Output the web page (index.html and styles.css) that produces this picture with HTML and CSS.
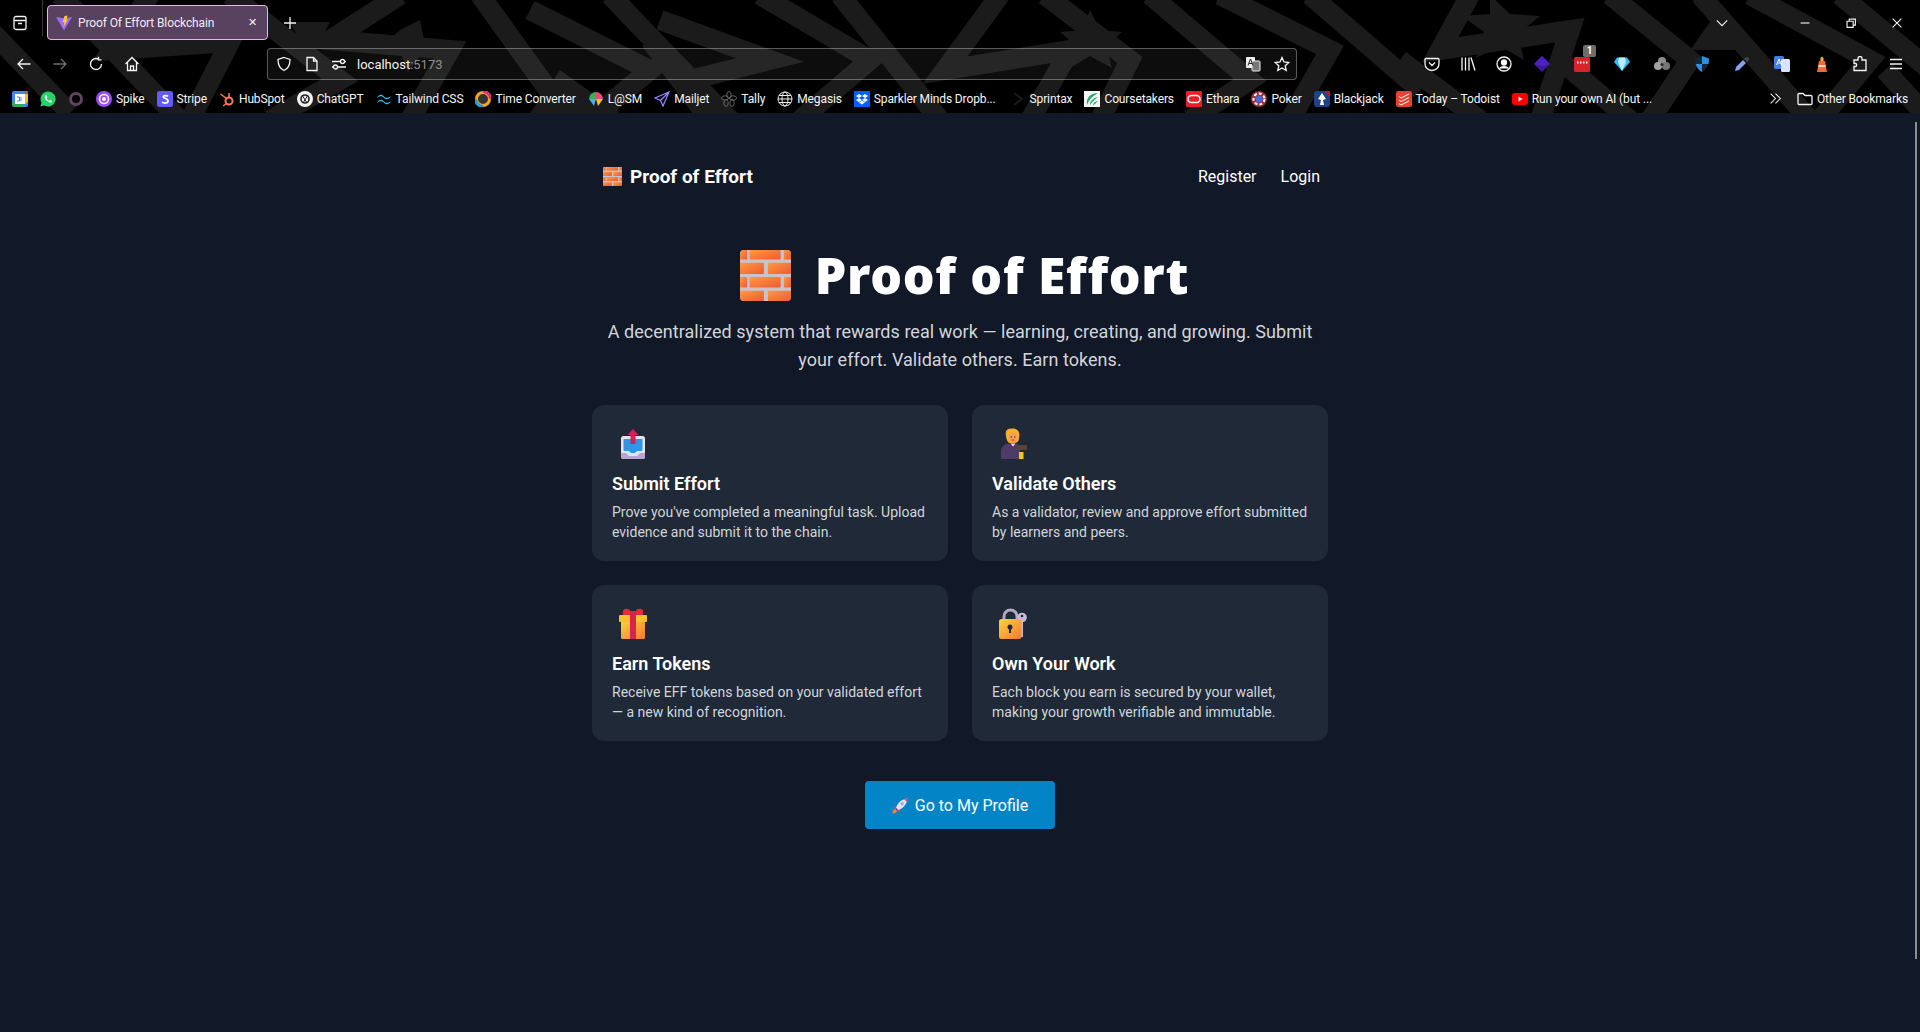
FILE: index.html
```html
<!DOCTYPE html>
<html lang="en">
<head>
    <meta charset="UTF-8">
    <meta name="viewport" content="width=device-width, initial-scale=1.0">
    <title>Proof Of Effort Blockchain</title>
    <link rel="stylesheet" href="styles.css">
</head>
<body>
    <svg class="defs" width="0" height="0" aria-hidden="true">
        <defs>
            <linearGradient id="brick-fill" x1="0" y1="0" x2="1" y2="1">
                <stop offset="0" stop-color="#ff9a3e"/>
                <stop offset="1" stop-color="#ee5a34"/>
            </linearGradient>
            <linearGradient id="gold-fill" x1="0" y1="0" x2="1" y2="1">
                <stop offset="0" stop-color="#ffd23c"/>
                <stop offset="1" stop-color="#f4792f"/>
            </linearGradient>
            <symbol id="brick" viewBox="0 0 32 32">
                <rect width="32" height="32" rx="2.5" fill="#c9c3c9"/>
                <g fill="url(#brick-fill)">
                    <path d="M0 2.5A2.5 2.5 0 0 1 2.5 0H4.5V6H0Z"/>
                    <rect x="6" width="19.5" height="6" rx=".6"/>
                    <path d="M27.5 0H29.5A2.5 2.5 0 0 1 32 2.5V6H27.5Z"/>
                    <rect y="8" width="15" height="7" rx=".6"/>
                    <rect x="17.500" y="8" width="14.500" height="7" rx=".6"/>
                    <rect y="17" width="4.500" height="6.500" rx=".6"/>
                    <rect x="6" y="17" width="19.500" height="6.500" rx=".6"/>
                    <rect x="27.500" y="17" width="4.500" height="6.500" rx=".6"/>
                    <path d="M0 25.500H15V32H2.500A2.500 2.500 0 0 1 0 29.500Z"/>
                    <path d="M17.500 25.500H32V29.500A2.500 2.500 0 0 1 29.500 32H17.500Z"/>
                </g>
            </symbol>
        </defs>
    </svg>

    <header class="browser">
        <svg class="browser-bg" viewBox="0 0 1920 113" preserveAspectRatio="none" aria-hidden="true">
            <g fill="none" stroke="#1b1b1b" stroke-width="20">
                <path d="M-10 30L70 113M60 -5L180 120M150 -5L112 50L230 42L190 120"/>
                <path d="M230 -5L340 80L270 120M400 -5L330 40L450 50L410 120"/>
                <path d="M480 -5L570 120M530 10L650 70L590 120M610 -5L730 120"/>
                <path d="M650 40L710 120M660 20L770 60L690 80M760 -5L870 60L800 120"/>
                <path d="M840 -5L940 120M1000 -5L945 70L1070 50L1030 120"/>
                <path d="M1045 -5L1130 60L1100 120M1150 -5L1250 80L1190 120"/>
                <path d="M1220 -5L1330 50L1290 120M1310 -5L1420 90M1400 60L1480 120"/>
                <path d="M1470 -5L1440 50L1570 30L1540 120M1560 60L1630 120M1610 -5L1690 60L1650 120"/>
                <path d="M1700 -5L1810 120M1750 -5L1870 60L1820 120M1840 -5L1930 70M1885 70L1930 120"/>
            </g>
            <g fill="#1b1b1b">
                <path d="M560 70L620 113H530Z"/>
                <path d="M1490 -5L1510 14L1540 16L1518 34L1524 60L1500 46L1476 58L1484 32L1462 16L1490 14Z"/>
                <path d="M1090 10L1100 30L1122 32L1106 46L1112 68L1090 56L1070 68L1076 46L1060 32L1082 30Z"/>
                <path d="M400 30L420 20L424 40L440 50L420 56L408 72L400 52L384 44Z"/>
                <path d="M1720 8L1750 50L1690 50Z"/>
                <path d="M290 22L330 22L310 60Z"/>
            </g>
        </svg>

        <div class="tabstrip">
            <svg class="chrome-icon tab-list" viewBox="0 0 16 16" aria-hidden="true"><path d="M2 6.500V3.500A2 2 0 0 1 4 1.500H12A2 2 0 0 1 14 3.500V6.500M2 5.500H14V12.500A2 2 0 0 1 12 14.500H4A2 2 0 0 1 2 12.500ZM6 8.500H10"/></svg>
            <div class="tab-sep"></div>
            <div class="tab">
                <svg class="favicon" viewBox="0 0 16 16" aria-hidden="true">
                    <path d="M0 2L7.500 3.200L16 2L8 15.500Z" fill="#9d6cff"/>
                    <path d="M8.500 1L11.500 .5L10.500 5L12 4.500L7.500 12L8.300 7L6.500 7.500Z" fill="#ffca28"/>
                </svg>
                <span class="tab-title">Proof Of Effort Blockchain</span>
                <span class="tab-close">✕</span>
            </div>
            <svg class="chrome-icon tab-new" viewBox="0 0 16 16" aria-hidden="true"><path d="M8 2V14M2 8H14"/></svg>
            <div class="window-controls">
                <svg class="chrome-icon win-chevron" viewBox="0 0 16 16" aria-hidden="true"><path d="M2 5L8 11L14 5"/></svg>
                <svg class="chrome-icon win-min" viewBox="0 0 16 16" aria-hidden="true"><path d="M3 8H13"/></svg>
                <svg class="chrome-icon win-restore" viewBox="0 0 16 16" aria-hidden="true"><path d="M3.500 6H10.500V13H3.500ZM6 6V3.500H13V10.500H10.500"/></svg>
                <svg class="chrome-icon win-close" viewBox="0 0 16 16" aria-hidden="true"><path d="M3 3L13 13M13 3L3 13"/></svg>
            </div>
        </div>

        <div class="toolbar">
            <div class="tool"><svg class="chrome-icon" viewBox="0 0 16 16" aria-hidden="true"><path d="M14.500 8H2M7 3L2 8L7 13"/></svg></div>
            <div class="tool tool-dim"><svg class="chrome-icon" viewBox="0 0 16 16" aria-hidden="true"><path d="M1.500 8H14M9 3L14 8L9 13"/></svg></div>
            <div class="tool"><svg class="chrome-icon" viewBox="0 0 16 16" aria-hidden="true"><path d="M13.500 8A5.500 5.500 0 1 1 10.500 3.100M10.500 .8V3.800H13.500"/></svg></div>
            <div class="tool"><svg class="chrome-icon" viewBox="0 0 16 16" aria-hidden="true"><path d="M1.500 8L8 1.500L14.500 8M3.500 6.500V14.500H12.500V6.500M6.500 14.500V10H9.500V14.500"/></svg></div>

            <div class="urlbar">
                <svg class="chrome-icon" viewBox="0 0 16 16" aria-hidden="true"><path d="M8 1.500L14 3.500C14 9 12 12.800 8 14.500C4 12.800 2 9 2 3.500Z"/></svg>
                <svg class="chrome-icon url-page" viewBox="0 0 16 16" aria-hidden="true"><path d="M3 1.500H9.500L13 5V14.500H3ZM9.500 1.500V5H13"/></svg>
                <svg class="chrome-icon url-perm" viewBox="0 0 16 16" aria-hidden="true"><path d="M1 5.500H9M14 5.500H15M1 11H2M7 11H15"/><circle cx="11.500" cy="5.500" r="2"/><circle cx="4.500" cy="11" r="2"/></svg>
                <span class="url-text">localhost<span class="url-port">:5173</span></span>
                <svg class="url-translate" viewBox="0 0 16 16" aria-hidden="true"><rect x="1" y="1" width="9" height="11" rx="1" fill="#eee"/><rect x="7" y="5" width="8" height="10" rx="1" fill="#777" stroke="#eee"/><path d="M3 9.500L5.500 3L8 9.500M4 7.500H7" stroke="#222" fill="none"/></svg>
                <svg class="chrome-icon url-star" viewBox="0 0 16 16" aria-hidden="true"><path d="M8 1.500L10 6L14.800 6.500L11.200 9.700L12.200 14.500L8 12L3.800 14.500L4.800 9.700L1.200 6.500L6 6Z"/></svg>
            </div>

            <div class="extensions">
                <div class="tool"><svg class="chrome-icon" viewBox="0 0 16 16" aria-hidden="true"><path d="M2 2.500H14A1 1 0 0 1 15 3.500V8A7 6.500 0 0 1 1 8V3.500A1 1 0 0 1 2 2.500ZM5 6.500L8 9.500L11 6.500"/></svg></div>
                <div class="tool"><svg class="chrome-icon" viewBox="0 0 16 16" aria-hidden="true"><path d="M2 1.500V14.500M5.500 1.500V14.500M9 1.500V14.500M11 1.500L15 14.500"/></svg></div>
                <div class="tool"><svg class="chrome-icon" viewBox="0 0 16 16" aria-hidden="true"><circle cx="8" cy="8" r="7"/><circle cx="8" cy="6.500" r="2.500" fill="#fff"/><path d="M3.500 12.500C5 10 11 10 12.500 12.500" fill="#fff"/></svg></div>
                <div class="ext"><svg viewBox="0 0 16 16" aria-hidden="true"><path d="M8 0L16 8L8 16L0 8Z" fill="#3b1a9a"/><path d="M8 0L16 8L8 10L0 8Z" fill="#4a22c4"/></svg></div>
                <div class="ext ext-badged">
                    <svg viewBox="0 0 16 16" aria-hidden="true"><rect y="1" width="16" height="15" rx="1.500" fill="#d8232a"/><path d="M3 6.500H4.500M6 6.500H7.500M9 6.500H10.500M12 6.500H13.500" stroke="#fff" stroke-width="2"/></svg>
                    <span class="ext-badge">1</span>
                </div>
                <div class="ext"><svg viewBox="0 0 16 16" aria-hidden="true"><path d="M3 1.500H13L16 6L8 15L0 6Z" fill="#39b8ee"/><path d="M5 1.500H11L12 6L8 15L4 6Z" fill="#b8ecff"/></svg></div>
                <div class="ext"><svg viewBox="0 0 16 16" aria-hidden="true"><circle cx="8" cy="5" r="4" fill="#8e8e8e"/><circle cx="4" cy="10" r="4" fill="#a2a2a2"/><circle cx="12" cy="10" r="4" fill="#777"/><circle cx="8" cy="8.500" r="1.500" fill="#222"/></svg></div>
                <div class="ext"><svg viewBox="0 0 16 16" aria-hidden="true"><path d="M8 0L15 2.500C15 9 12.500 13.500 8 16C3.500 13.500 1 9 1 2.500Z" fill="#14263c"/><path d="M8 0L15 2.500C15 5 14.800 6 14.500 8H8ZM8 8V16C5 14.500 2.500 11 1.600 8Z" fill="#2f8fd8"/></svg></div>
                <div class="ext"><svg viewBox="0 0 16 16" aria-hidden="true"><path d="M1 15L2 11L9 4L12 7L5 14Z" fill="#7ea3f0"/><path d="M10 3L13 0.500L15.500 3L13 6Z" fill="#444"/></svg></div>
                <div class="ext"><svg viewBox="0 0 16 16" aria-hidden="true"><rect width="10" height="13" rx="1.500" fill="#3f7fe8"/><rect x="7" y="3" width="9" height="13" rx="1.500" fill="#d8e4f8"/><path d="M2.500 9L5 3L7.500 9M3.500 7H6.500" stroke="#fff" fill="none"/></svg></div>
                <div class="ext"><svg viewBox="0 0 16 16" aria-hidden="true"><path d="M6.500 2L8 .5L9.500 2V5H6.500Z" fill="#f4b63f"/><path d="M5 5H11L13 16H3Z" fill="#f26a3b"/><path d="M4.600 9H11.400L11.700 11H4.300Z" fill="#ffd9c2"/></svg></div>
                <div class="tool tool-narrow"><svg class="chrome-icon" viewBox="0 0 16 16" aria-hidden="true"><path d="M6 2.500A2 2 0 0 1 10 2.500V4H14V14.500H2V10.500H4A2 2 0 0 0 4 7.500H2V4H6Z"/></svg></div>
                <div class="tool tool-narrow"><svg class="chrome-icon" viewBox="0 0 16 16" aria-hidden="true"><path d="M2 3.500H14M2 8H14M2 12.500H14"/></svg></div>
            </div>
        </div>

        <div class="bookmarks">
            <span class="bookmark"><svg viewBox="0 0 16 16" aria-hidden="true"><rect width="16" height="16" rx="2" fill="#4285f4"/><rect x="3" y="3" width="10" height="10" fill="#fff"/><path d="M0 11V14L2 16H11V13H3V11Z" fill="#34a853"/><path d="M13 0H16V3H13Z" fill="#ea4335"/><path d="M13 3H16V11L13 13Z" fill="#fbbc04"/><path d="M5 6H7.500V10H5M9 6V10.500" stroke="#4285f4" fill="none"/></svg></span>
            <span class="bookmark"><svg viewBox="0 0 16 16" aria-hidden="true"><path d="M8 .5A7.500 7.500 0 0 0 1.500 11.700L.5 15.500L4.400 14.500A7.500 7.500 0 1 0 8 .5Z" fill="#25d366"/><path d="M5 4.500L6.500 4.300L7.300 6.300L6.500 7.300C7 8.500 8 9.400 9 10L10 9L12 10L11.700 11.300C9 12.500 3.500 8 5 4.500Z" fill="#fff"/></svg></span>
            <span class="bookmark"><svg viewBox="0 0 16 16" aria-hidden="true"><circle cx="8" cy="8" r="5.500" fill="none" stroke="#5e4560" stroke-width="3"/></svg></span>
            <span class="bookmark"><svg viewBox="0 0 16 16" aria-hidden="true"><circle cx="8" cy="8" r="8" fill="#9a4df0"/><circle cx="8" cy="8" r="4.500" fill="none" stroke="#fff" stroke-width="1.400"/><circle cx="8" cy="8" r="2" fill="#fff"/></svg>Spike</span>
            <span class="bookmark"><svg viewBox="0 0 16 16" aria-hidden="true"><rect width="16" height="16" rx="2.500" fill="#635bff"/><path d="M11 5.300C9.500 4.300 6.500 4.200 6.300 5.800C6.100 7.500 11 7 11 10C11 12.300 7.500 12.500 5 11.300" fill="none" stroke="#fff" stroke-width="1.800"/></svg>Stripe</span>
            <span class="bookmark"><svg viewBox="0 0 16 16" aria-hidden="true"><circle cx="10" cy="10" r="3.500" fill="none" stroke="#ff7a59" stroke-width="2"/><path d="M10 6V2M7.500 7.500L1.500 3M7.500 12.500L4 15" stroke="#ff7a59" stroke-width="1.500"/></svg>HubSpot</span>
            <span class="bookmark"><svg viewBox="0 0 16 16" aria-hidden="true"><circle cx="8" cy="8" r="8" fill="#f2f2f2"/><circle cx="8" cy="8" r="4" fill="none" stroke="#222" stroke-width="1.600"/><path d="M5 4L10 12M11 4L6 12" stroke="#222"/></svg>ChatGPT</span>
            <span class="bookmark"><svg viewBox="0 0 16 16" aria-hidden="true"><path d="M1 7C3 3 6 3 8 5.500C9.500 7 12 7.500 15 5C13 9 10 9 8 6.800C6.500 5 4 4.500 1 7ZM1 12C3 8 6 8 8 10.500C9.500 12 12 12.500 15 10C13 14 10 14 8 11.800C6.500 10 4 9.500 1 12Z" fill="#38bdf8"/></svg>Tailwind CSS</span>
            <span class="bookmark"><svg viewBox="0 0 16 16" aria-hidden="true"><circle cx="8" cy="8" r="6.500" fill="#333" stroke="#f5a623" stroke-width="3"/><path d="M8 .5A7.500 7.500 0 0 1 15.500 8" fill="none" stroke="#e4317f" stroke-width="3"/><path d="M8 15.500A7.500 7.500 0 0 1 .5 8" fill="none" stroke="#16a3e0" stroke-width="3"/></svg>Time Converter</span>
            <span class="bookmark"><svg viewBox="0 0 16 16" aria-hidden="true"><path d="M1 8A7 7 0 0 1 8 1L8 8Z" fill="#37b24d"/><path d="M8 1A7 7 0 0 1 15 8L8 8Z" fill="#e64980"/><path d="M15 8L8 8L10 15Z" fill="#fcc419"/><path d="M8 8L1 8L6 15Z" fill="#4dabf7"/></svg>L@SM</span>
            <span class="bookmark"><svg viewBox="0 0 16 16" aria-hidden="true"><path d="M15 1L1 7L6.500 9.500L9 15ZM15 1L6.500 9.500" fill="none" stroke="#8f87ff" stroke-width="1.300"/></svg>Mailjet</span>
            <span class="bookmark"><svg viewBox="0 0 16 16" aria-hidden="true"><g fill="none" stroke="#666"><ellipse cx="8" cy="4" rx="2.200" ry="3.500"/><ellipse cx="4" cy="7" rx="3.500" ry="2.200"/><ellipse cx="12" cy="7" rx="3.500" ry="2.200"/><ellipse cx="5" cy="12" rx="2.200" ry="3.500"/><ellipse cx="11" cy="12" rx="2.200" ry="3.500"/></g></svg>Tally</span>
            <span class="bookmark"><svg viewBox="0 0 16 16" aria-hidden="true"><g fill="none" stroke="#eee"><circle cx="8" cy="8" r="7"/><ellipse cx="8" cy="8" rx="3" ry="7"/><path d="M1 8H15M2 4.500H14M2 11.500H14"/></g></svg>Megasis</span>
            <span class="bookmark"><svg viewBox="0 0 16 16" aria-hidden="true"><rect width="16" height="16" fill="#0061fe"/><path d="M5 3L8 5L5 7L2 5ZM11 3L14 5L11 7L8 5ZM5 7L8 9L5 11L2 9ZM11 7L14 9L11 11L8 9ZM5 11.500L8 9.700L11 11.500L8 13.500Z" fill="#fff"/></svg>Sparkler Minds Dropb...</span>
            <span class="bookmark bookmark-sprintax"><svg viewBox="0 0 16 16" aria-hidden="true"><path d="M4 2L12 8L4 14" fill="none" stroke="#1a1a1a" stroke-width="2"/></svg>Sprintax</span>
            <span class="bookmark"><svg viewBox="0 0 16 16" aria-hidden="true"><rect width="16" height="16" fill="#f2f7f3"/><path d="M14 2C6 2 2 7 3 14C6 7 9 5 14 2ZM14 6C9 7 6 10 6 14C8 11 10 9 14 6ZM14 10C11 10.500 9 12 9 14.500C11 13 12 12 14 10Z" fill="#1faa6b"/></svg>Coursetakers</span>
            <span class="bookmark"><svg viewBox="0 0 16 16" aria-hidden="true"><rect width="16" height="16" rx="1" fill="#ee1c25"/><rect x="2" y="4.500" width="12" height="7" rx="3.500" fill="none" stroke="#fff" stroke-width="1.500"/></svg>Ethara</span>
            <span class="bookmark"><svg viewBox="0 0 16 16" aria-hidden="true"><circle cx="8" cy="8" r="8" fill="#9b2c3a"/><circle cx="8" cy="8" r="5.500" fill="none" stroke="#fff" stroke-width="2" stroke-dasharray="3 2"/><circle cx="8" cy="8" r="3.500" fill="#3f6fd8"/></svg>Poker</span>
            <span class="bookmark"><svg viewBox="0 0 16 16" aria-hidden="true"><rect width="16" height="16" rx="3" fill="#1d428a"/><path d="M8 2L12 8L9 9L10 14L6 14L7 9L4 8Z" fill="#fff"/><path d="M10 0H16V6Z" fill="#c8102e"/></svg>Blackjack</span>
            <span class="bookmark"><svg viewBox="0 0 16 16" aria-hidden="true"><rect width="16" height="16" rx="2.500" fill="#e44332"/><path d="M3 5.500L5 7L13 3M3 9L5 10.500L13 6.500M3 12.500L5 14L13 10" fill="none" stroke="#fff"/></svg>Today – Todoist</span>
            <span class="bookmark"><svg viewBox="0 0 16 16" aria-hidden="true"><rect y="2" width="16" height="12" rx="3" fill="#f00"/><path d="M6.500 5.500L10.500 8L6.500 10.500Z" fill="#fff"/></svg>Run your own AI (but ...</span>
            <div class="bookmarks-end">
                <svg class="chrome-icon more-marks" viewBox="0 0 16 16" aria-hidden="true"><path d="M2 2L8 8L2 14M8 2L14 8L8 14"/></svg>
                <span class="bookmark"><svg class="chrome-icon" viewBox="0 0 16 16" aria-hidden="true"><path d="M1 3.500A1 1 0 0 1 2 2.500H6L8 4.500H14A1 1 0 0 1 15 5.500V12.500A1 1 0 0 1 14 13.500H2A1 1 0 0 1 1 12.500Z"/></svg>Other Bookmarks</span>
            </div>
        </div>
    </header>

    <div class="app">
        <nav class="navbar">
            <a class="brand" href="#"><svg class="brand-icon" aria-hidden="true"><use href="#brick"/></svg>Proof of Effort</a>
            <div class="nav-links">
                <a href="#">Register</a>
                <a href="#">Login</a>
            </div>
        </nav>

        <main class="home">
            <h1 class="hero-title"><svg class="hero-icon" aria-hidden="true"><use href="#brick"/></svg>Proof of Effort</h1>
            <p class="hero-text">A decentralized system that rewards real work — learning, creating, and growing. Submit your effort. Validate others. Earn tokens.</p>

            <section class="cards">
                <article class="card">
                    <svg class="card-icon" viewBox="0 0 36 36" aria-hidden="true">
                        <rect x="9" y="11" width="24" height="23" rx="2.500" fill="#e6e2ea"/>
                        <path d="M9 28H14L17 31H25L28 28H33V31.500A2.500 2.500 0 0 1 30.500 34H11.500A2.500 2.500 0 0 1 9 31.500Z" fill="#b9a6d0"/>
                        <path d="M11.500 14H30.500V24.500A1.500 1.500 0 0 1 29 26H25L23 28H19L17 26H13A1.500 1.500 0 0 1 11.500 24.500Z" fill="#2f97e8"/>
                        <path d="M21 4L26.500 10H23.500V19H18.500V10H15.500Z" fill="#d81e5b"/>
                    </svg>
                    <h3>Submit Effort</h3>
                    <p>Prove you've completed a meaningful task. Upload evidence and submit it to the chain.</p>
                </article>
                <article class="card">
                    <svg class="card-icon" viewBox="0 0 36 36" aria-hidden="true">
                        <path d="M9 34V26C9 21 13 18.500 18 18.500H23C26 18.500 28 21 28 24V34Z" fill="#4e3c68"/>
                        <path d="M18.500 18.500L21 21.500L23.500 18.500Z" fill="#e8e4ee"/>
                        <path d="M14 11C12.500 4 17 3.500 20.500 3.500C24.500 3.500 28.500 5.500 27 13C27 16 25 18 23 18H18C16 18 14.500 15 14 11Z" fill="#f6b324"/>
                        <ellipse cx="21" cy="12.500" rx="4.500" ry="5" fill="#f79a5c"/>
                        <circle cx="19.300" cy="12" r=".7" fill="#3a2a2a"/>
                        <circle cx="22.700" cy="12" r=".7" fill="#3a2a2a"/>
                        <path d="M19.800 15H22.200" stroke="#b3423a"/>
                        <rect x="25" y="20" width="10" height="5" rx="1" fill="#5d4037"/>
                        <rect x="27" y="27" width="4.500" height="7" fill="#f6c324"/>
                    </svg>
                    <h3>Validate Others</h3>
                    <p>As a validator, review and approve effort submitted by learners and peers.</p>
                </article>
                <article class="card">
                    <svg class="card-icon" viewBox="0 0 36 36" aria-hidden="true">
                        <circle cx="14.500" cy="7.500" r="3.800" fill="#e52b3a"/>
                        <circle cx="27.500" cy="7.500" r="3.800" fill="#e52b3a"/>
                        <rect x="9" y="16" width="24" height="18" rx="1.500" fill="url(#gold-fill)"/>
                        <rect x="7" y="10" width="28" height="7" rx="1" fill="#fbc02d"/>
                        <rect x="18" y="6" width="6" height="28" fill="#d8234f"/>
                    </svg>
                    <h3>Earn Tokens</h3>
                    <p>Receive EFF tokens based on your validated effort — a new kind of recognition.</p>
                </article>
                <article class="card">
                    <svg class="card-icon" viewBox="0 0 36 36" aria-hidden="true">
                        <path d="M12 15V11.500A6.500 6.500 0 0 1 25 11.500V15" fill="none" stroke="#b3a8bd" stroke-width="3"/>
                        <rect x="27" y="15" width="4" height="17" fill="#c7bad8"/>
                        <circle cx="30" cy="12.500" r="4.800" fill="#c7bad8"/>
                        <circle cx="30" cy="11" r="1.300" fill="#1f2937"/>
                        <rect x="7" y="14" width="22.500" height="20" rx="2.500" fill="url(#gold-fill)"/>
                        <circle cx="18" cy="22" r="2.500" fill="#23233a"/>
                        <rect x="17" y="22" width="2" height="6" fill="#23233a"/>
                    </svg>
                    <h3>Own Your Work</h3>
                    <p>Each block you earn is secured by your wallet, making your growth verifiable and immutable.</p>
                </article>
            </section>

            <a class="profile-btn" href="#">
                <svg class="rocket" viewBox="0 0 16 16" aria-hidden="true">
                    <path d="M.5 15.500C.5 13 1.500 11.500 3 11L5 13C4.500 14.500 3 15.500 .5 15.500Z" fill="#f08a24"/>
                    <path d="M4 8.500C3 8.500 2 9 1.500 10.500H5ZM7.500 12C7.500 13 7 14 5.500 14.500V11Z" fill="#f0386b"/>
                    <path d="M4 9.500C6 4.500 10 1 15.500 .5C15 6 11.500 10 6.500 12Z" fill="#e8e0ea"/>
                    <path d="M12 1C13.500 .7 14.500 .6 15.500 .5C15.400 1.500 15.300 2.500 15 4Z" fill="#f0386b"/>
                    <circle cx="10.200" cy="5.800" r="1.700" fill="#8fb5ec"/>
                </svg>
                Go to My Profile
            </a>
        </main>
    </div>

    <div class="scrollbar-thumb"></div>
</body>
</html>
```

FILE: styles.css
```css
* {
    box-sizing: border-box;
}

html,
body {
    margin: 0;
    padding: 0;
    height: 100%;
    overflow: hidden;
}

body {
    background-color: #111827;
    color: #ffffff;
    font-family: Roboto, "Noto Sans", sans-serif;
}

a {
    color: inherit;
    text-decoration: none;
}

.defs {
    position: absolute;
}

/* browser window */
.browser {
    position: relative;
    height: 113px;
    background-color: #000000;
    font-size: 12px;
    overflow: hidden;
}

.browser-bg {
    position: absolute;
    inset: 0;
    width: 100%;
    height: 100%;
}

.tabstrip,
.toolbar,
.bookmarks {
    position: relative;
    display: flex;
    align-items: center;
}

.chrome-icon {
    width: 16px;
    height: 16px;
    flex: none;
    fill: none;
    stroke: #f4f4f4;
    stroke-width: 1.3;
}

.tabstrip {
    height: 40px;
    padding-top: 5px;
}

.tab-list {
    margin-left: 12px;
}

.tab-sep {
    width: 1px;
    height: 36px;
    margin: -5px 4px 0 14px;
    align-self: flex-start;
    background-color: #3a3a3a;
}

.tab {
    display: flex;
    align-items: center;
    width: 221px;
    height: 35px;
    padding: 0 10px 0 8px;
    background-color: #59425f;
    border: 1px solid #e7b4ee;
    border-radius: 4px;
}

.favicon {
    width: 16px;
    height: 16px;
    flex: none;
}

.tab-title {
    flex: 1;
    margin-left: 6px;
    color: #f1eaf2;
    letter-spacing: -0.12px;
    white-space: nowrap;
}

.tab-close {
    font-size: 11px;
    color: #f4f4f4;
}

.tab-new {
    margin-left: 14px;
}

.window-controls {
    display: flex;
    align-items: center;
    margin-left: auto;
}

.window-controls .chrome-icon {
    width: 14px;
    height: 14px;
}

.win-chevron {
    margin-right: 69px;
}

.win-min {
    margin-right: 32px;
}

.win-restore {
    margin-right: 32px;
}

.win-close {
    margin-right: 16px;
}

.toolbar {
    height: 32px;
    margin-top: 8px;
    padding-left: 6px;
}

.tool,
.ext {
    display: flex;
    align-items: center;
    justify-content: center;
    flex: none;
    width: 36px;
    height: 32px;
}

.tool-dim {
    opacity: 0.45;
}

.tool-narrow {
    width: 36px;
}

.urlbar {
    display: flex;
    align-items: center;
    flex: none;
    width: 1030px;
    height: 32px;
    margin-left: 117px;
    padding: 0 6px 0 8px;
    background-color: rgba(255, 255, 255, 0.05);
    border: 1px solid rgba(255, 255, 255, 0.32);
    border-radius: 4px;
}

.url-page {
    margin-left: 12px;
}

.url-perm {
    margin-left: 11px;
}

.url-text {
    flex: 1;
    margin-left: 10px;
    font-size: 13px;
    color: #f2f2f2;
}

.url-port {
    color: #8d8d8d;
}

.url-translate {
    width: 16px;
    height: 16px;
    margin-right: 13px;
}

.extensions {
    display: flex;
    align-items: center;
    margin-left: 117px;
}

.ext {
    width: 40px;
}

.ext svg {
    width: 16px;
    height: 16px;
}

.ext-badged {
    position: relative;
}

.ext-badge {
    position: absolute;
    top: -3px;
    right: 6px;
    min-width: 13px;
    height: 12px;
    border-radius: 2px;
    background-color: #6d6d6d;
    font-size: 10px;
    font-weight: 700;
    line-height: 12px;
    text-align: center;
}

.bookmarks {
    height: 33px;
    padding: 4px 0 0 12px;
    gap: 12px;
}

.bookmark {
    display: inline-flex;
    align-items: center;
    flex: none;
    gap: 4px;
    color: #f5f5f5;
    letter-spacing: -0.12px;
    white-space: nowrap;
}

.bookmark svg {
    width: 16px;
    height: 16px;
    flex: none;
}

.bookmark-sprintax {
    margin-left: 2px;
}

.bookmarks-end {
    display: flex;
    align-items: center;
    margin-left: auto;
    padding-right: 12px;
    gap: 15px;
}

.more-marks {
    width: 13px;
    height: 13px;
}

/* page */
.navbar {
    display: flex;
    align-items: center;
    justify-content: space-between;
    width: 736px;
    height: 28px;
    margin: 49px auto 0;
    padding: 0 8px 0 11px;
}

.brand {
    display: flex;
    align-items: center;
    gap: 8px;
    font-size: 19px;
    font-weight: 700;
}

.brand-icon {
    width: 19px;
    height: 19px;
}

.nav-links {
    display: flex;
    gap: 24px;
    font-size: 16px;
}

.home {
    display: flex;
    flex-direction: column;
    align-items: center;
    width: 736px;
    margin: 0 auto;
}

.hero-title {
    display: flex;
    align-items: center;
    gap: 24px;
    height: 64px;
    margin: 53px 0 0;
    padding-left: 9px;
    font-family: "Noto Sans", sans-serif;
    font-size: 50px;
    font-weight: 900;
    letter-spacing: 0.7px;
    line-height: 64px;
}

.hero-icon {
    width: 51px;
    height: 51px;
}

.hero-text {
    width: 736px;
    margin: 11px 0 0;
    color: #d1d5db;
    font-size: 18px;
    letter-spacing: 0.04px;
    line-height: 28px;
    text-align: center;
}

.cards {
    display: grid;
    grid-template-columns: 1fr 1fr;
    gap: 24px;
    width: 100%;
    margin-top: 31px;
}

.card {
    height: 156px;
    padding: 20px;
    background-color: #1f2937;
    border-radius: 12px;
}

.card-icon {
    display: block;
    width: 36px;
    height: 36px;
    margin-bottom: 9px;
}

.card h3 {
    margin: 0 0 4px;
    font-size: 18px;
    font-weight: 600;
    line-height: 28px;
}

.card p {
    margin: 0;
    color: #d1d5db;
    font-size: 14px;
    line-height: 20px;
}

.profile-btn {
    display: flex;
    align-items: center;
    justify-content: center;
    gap: 7px;
    width: 190px;
    height: 48px;
    margin-top: 40px;
    padding-top: 1px;
    background-color: #0284c7;
    border-radius: 4px;
    font-size: 16px;
}

.rocket {
    width: 16px;
    height: 16px;
}

.scrollbar-thumb {
    position: absolute;
    top: 122px;
    right: 3px;
    width: 2px;
    height: 837px;
    background-color: #8d8d8d;
}
```
